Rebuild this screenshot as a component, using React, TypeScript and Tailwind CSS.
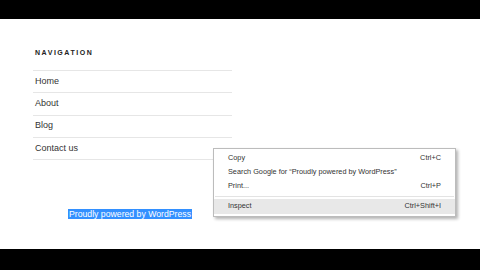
const NAV = ['Home', 'About', 'Blog', 'Contact us']

const MENU = [
  { label: 'Copy', key: 'Ctrl+C' },
  { label: 'Search Google for \u201cProudly powered by WordPress\u201d', key: '' },
  { label: 'Print...', key: 'Ctrl+P' },
]

export default function App() {
  return (
    <div className="relative w-[480px] h-[270px] bg-white overflow-hidden flex flex-col" style={{ fontFamily: '"Liberation Sans", Arial, sans-serif' }}>
      <div className="h-[19px] bg-black shrink-0" />

      <div className="flex-1 pl-[33px] pt-[30px]">
        <h2 className="pl-[2px] text-[7px] font-bold tracking-[0.22em] text-[#222] leading-[8px]">NAVIGATION</h2>
        <ul className="mt-[13px] w-[199px] border-b border-[#e6e6e6]">
          {NAV.map(item => (
            <li key={item} className="h-[22.3px] border-t border-[#e6e6e6] pl-[2px] flex items-center text-[9px] text-[#333]">
              {item}
            </li>
          ))}
        </ul>
        <p className="mt-[46px] ml-[35px] leading-[11px]">
          <span className="bg-[#3390ff] text-white text-[8.7px] px-[1px]">Proudly powered by WordPress</span>
        </p>
      </div>

      <div className="h-[21px] bg-black shrink-0" />

      {/* context menu */}
      <div className="absolute left-[213px] top-[148px] w-[243px] bg-white border border-[#bcbcbc] shadow-[2px_2px_3px_rgba(0,0,0,0.3)] pt-[2px] pb-[2px] text-[7.3px] text-[#333]">
        {MENU.map(m => (
          <div key={m.label} className="h-[14px] flex items-center justify-between pl-[14px] pr-[14px]">
            <span>{m.label}</span>
            <span>{m.key}</span>
          </div>
        ))}
        <div className="mt-[3px] mb-[2px] mx-[1px] h-px bg-[#e3e3e3]" />
        <div className="h-[15px] flex items-center justify-between pl-[14px] pr-[14px] bg-[#e8e8e8]">
          <span>Inspect</span>
          <span>Ctrl+Shift+I</span>
        </div>
      </div>
    </div>
  )
}
